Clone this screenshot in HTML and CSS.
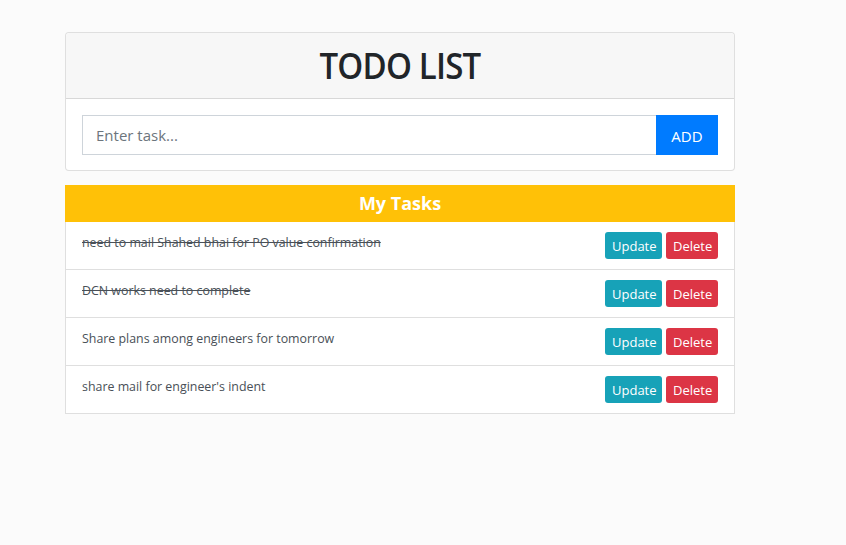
FILE: index.html
```html
<!DOCTYPE html>
<html>
<head>
<meta charset="utf-8">
<link rel="stylesheet" href="styles.css">
</head>
<body>
<div class="wrap">
  <div class="card">
    <div class="card-header"><h1>TODO LIST</h1></div>
    <div class="card-body">
      <div class="input-group">
        <input class="task-input" type="text" placeholder="Enter task...">
        <button class="btn-add">ADD</button>
      </div>
    </div>
  </div>
  <div class="tasks">
    <div class="tasks-title">My Tasks</div>
    <ul class="list">
      <li class="item"><span class="text done">need to mail Shahed bhai for PO value confirmation</span><span class="actions"><button class="btn upd">Update</button><button class="btn del">Delete</button></span></li>
      <li class="item"><span class="text done">DCN works need to complete</span><span class="actions"><button class="btn upd">Update</button><button class="btn del">Delete</button></span></li>
      <li class="item"><span class="text">Share plans among engineers for tomorrow</span><span class="actions"><button class="btn upd">Update</button><button class="btn del">Delete</button></span></li>
      <li class="item"><span class="text">share mail for engineer's indent</span><span class="actions"><button class="btn upd">Update</button><button class="btn del">Delete</button></span></li>
    </ul>
  </div>
</div>
</body>
</html>
```

FILE: styles.css
```css
* { box-sizing: border-box; }
html, body { margin: 0; padding: 0; }
body {
  background: #fbfbfb;
  font-family: "Open Sans", "Noto Sans", sans-serif;
  color: #212529;
}
.wrap {
  width: 670px;
  margin-left: 65px;
  padding-top: 32px;
}
.card {
  background: #fff;
  border: 1px solid rgba(0,0,0,.125);
  border-radius: 4px;
}
.card-header {
  background: #f7f7f7;
  border-bottom: 1px solid rgba(0,0,0,.125);
  border-radius: 4px 4px 0 0;
  height: 66px;
  display: flex;
  align-items: center;
  justify-content: center;
}
h1 {
  margin: 0;
  font-size: 33px;
  font-weight: 600;
  line-height: 1.2;
  color: #212529;
  letter-spacing: -0.8px;
  transform: scaleY(1.08);
}
.card-body { padding: 16px 16px 15px; }
.input-group { display: flex; height: 40px; }
.task-input {
  flex: 1;
  border: 1px solid #ced4da;
  border-right: none;
  padding: 0 13px;
  font-family: inherit;
  font-size: 15px;
  color: #495057;
  outline: none;
  background: #fff;
}
.task-input::placeholder { color: #6c757d; }
.btn-add {
  width: 62px;
  background: #007bff;
  color: #fff;
  border: none;
  font-family: inherit;
  font-size: 15px;
  padding-top: 2px;
}
.tasks { margin-top: 14px; }
.tasks-title {
  background: #ffc107;
  color: #fff;
  font-weight: 700;
  font-size: 18px;
  text-align: center;
  height: 37px;
  line-height: 36px;
}
.list { list-style: none; margin: 0; padding: 0; background: #fff; }
.item {
  display: flex;
  align-items: center;
  justify-content: space-between;
  height: 48px;
  border: 1px solid rgba(0,0,0,.125);
  border-top: none;
  padding: 0 16px;
}
.text {
  font-size: 12.4px;
  color: #495057;
  align-self: flex-start;
  margin-top: 12px;
}
.done { text-decoration: line-through; }
.actions { display: flex; gap: 4px; align-self: flex-start; margin-top: 10px; }
.btn {
  height: 27px;
  border: none;
  border-radius: 3px;
  color: #fff;
  font-family: inherit;
  font-size: 13px;
  padding: 0 7px;
}
.upd { background: #17a2b8; width: 57px; }
.del { background: #dc3545; width: 52px; }
```
